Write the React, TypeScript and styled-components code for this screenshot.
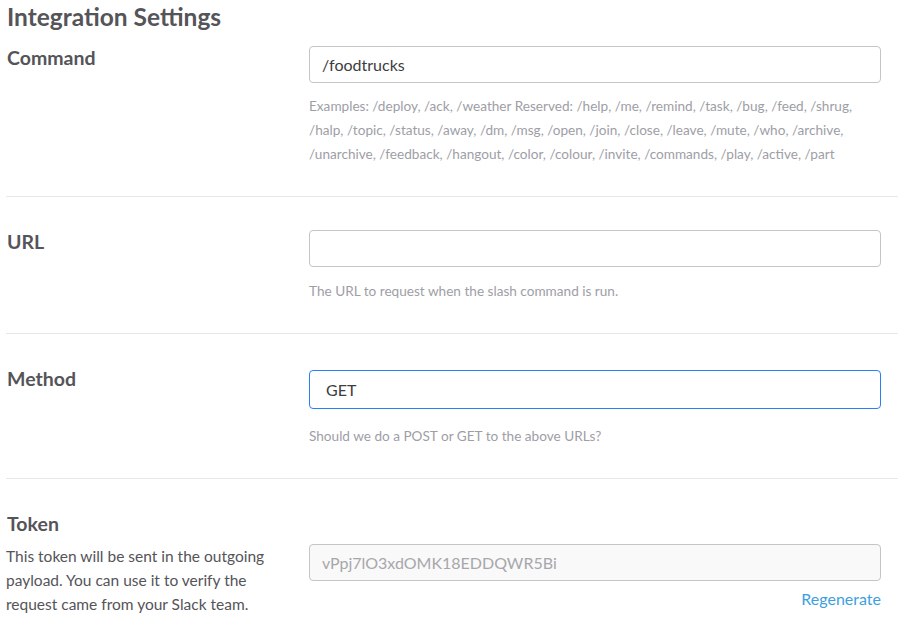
import styled, { createGlobalStyle } from 'styled-components';

const GlobalStyle = createGlobalStyle`
	body {
		margin: 0;
		background: #ffffff;
		font-family: Lato, "Noto Sans", sans-serif;
		color: #555459;
	}
`;

const Page = styled.div`
	padding-left: 6px;
	width: 892px;
	overflow: hidden;
`;

const Heading = styled.h2`
	margin: 2px 0 14px 1px;
	font-size: 24.5px;
	line-height: 30px;
	font-weight: 700;
	color: #555459;
`;

const Section = styled.section<{ $divided?: boolean; $first?: boolean }>`
	display: grid;
	grid-template-columns: 303px 572px;
	padding: ${({ $first }) => ($first ? '0' : '33px')} 0 30px;
	border-top: ${({ $divided }) => ($divided ? '1px solid #e8e8e8' : 'none')};
`;

const TokenSection = styled.section`
	border-top: 1px solid #e8e8e8;
	padding-top: 33px;
`;

const TokenRow = styled.div`
	display: grid;
	grid-template-columns: 303px 572px;
	margin-top: 8px;
`;

const Label = styled.h3`
	margin: 0;
	padding-left: 1px;
	font-size: 19.5px;
	line-height: 24px;
	font-weight: 700;
	color: #555459;
`;

const Field = styled.div`
	display: flex;
	flex-direction: column;
`;

const Input = styled.div<{ $focus?: boolean; $disabled?: boolean }>`
	box-sizing: border-box;
	height: ${({ $focus }) => ($focus ? '39px' : '37px')};
	margin-top: ${({ $focus }) => ($focus ? '3px' : '0')};
	padding: 0 ${({ $focus }) => ($focus ? '16px' : '12px')};
	display: flex;
	align-items: center;
	border: 1px solid ${({ $focus }) => ($focus ? '#2780f8' : '#c5c5c5')};
	border-radius: 4px;
	background: ${({ $disabled }) => ($disabled ? '#f9f9f9' : '#ffffff')};
	color: ${({ $disabled }) => ($disabled ? '#a7a7ab' : '#3d3c40')};
	font-size: 16px;
`;

const Help = styled.p<{ $gap?: number }>`
	margin: ${({ $gap }) => $gap ?? 11}px 0 0;
	font-size: 13.6px;
	line-height: 24px;
	color: #9e9ea6;
`;

const Description = styled.p`
	margin: 0;
	padding-right: 26px;
	font-size: 15.5px;
	line-height: 24px;
	color: #555459;
`;

const RegenLink = styled.a`
	align-self: flex-end;
	margin-top: 6px;
	font-size: 16px;
	line-height: 24px;
	color: #3d9fe0;
	text-decoration: none;
	cursor: pointer;
`;

const examples =
	'Examples: /deploy, /ack, /weather Reserved: /help, /me, /remind, /task, /bug, /feed, /shrug, /halp, /topic, /status, /away, /dm, /msg, /open, /join, /close, /leave, /mute, /who, /archive, /unarchive, /feedback, /hangout, /color, /colour, /invite, /commands, /play, /active, /part';

const App = () => (
	<Page>
		<GlobalStyle />
		<Heading>Integration Settings</Heading>

		<Section $first>
			<Label>Command</Label>
			<Field>
				<Input>/foodtrucks</Input>
				<Help>{examples}</Help>
			</Field>
		</Section>

		<Section $divided>
			<Label>URL</Label>
			<Field>
				<Input />
				<Help $gap={12}>The URL to request when the slash command is run.</Help>
			</Field>
		</Section>

		<Section $divided>
			<Label>Method</Label>
			<Field>
				<Input $focus>GET</Input>
				<Help $gap={15}>Should we do a POST or GET to the above URLs?</Help>
			</Field>
		</Section>

		<TokenSection>
			<Label>Token</Label>
			<TokenRow>
				<Description>
					This token will be sent in the outgoing payload. You can use it to verify the request came
					from your Slack team.
				</Description>
				<Field>
					<Input $disabled>vPpj7lO3xdOMK18EDDQWR5Bi</Input>
					<RegenLink>Regenerate</RegenLink>
				</Field>
			</TokenRow>
		</TokenSection>
	</Page>
);

export default App;
